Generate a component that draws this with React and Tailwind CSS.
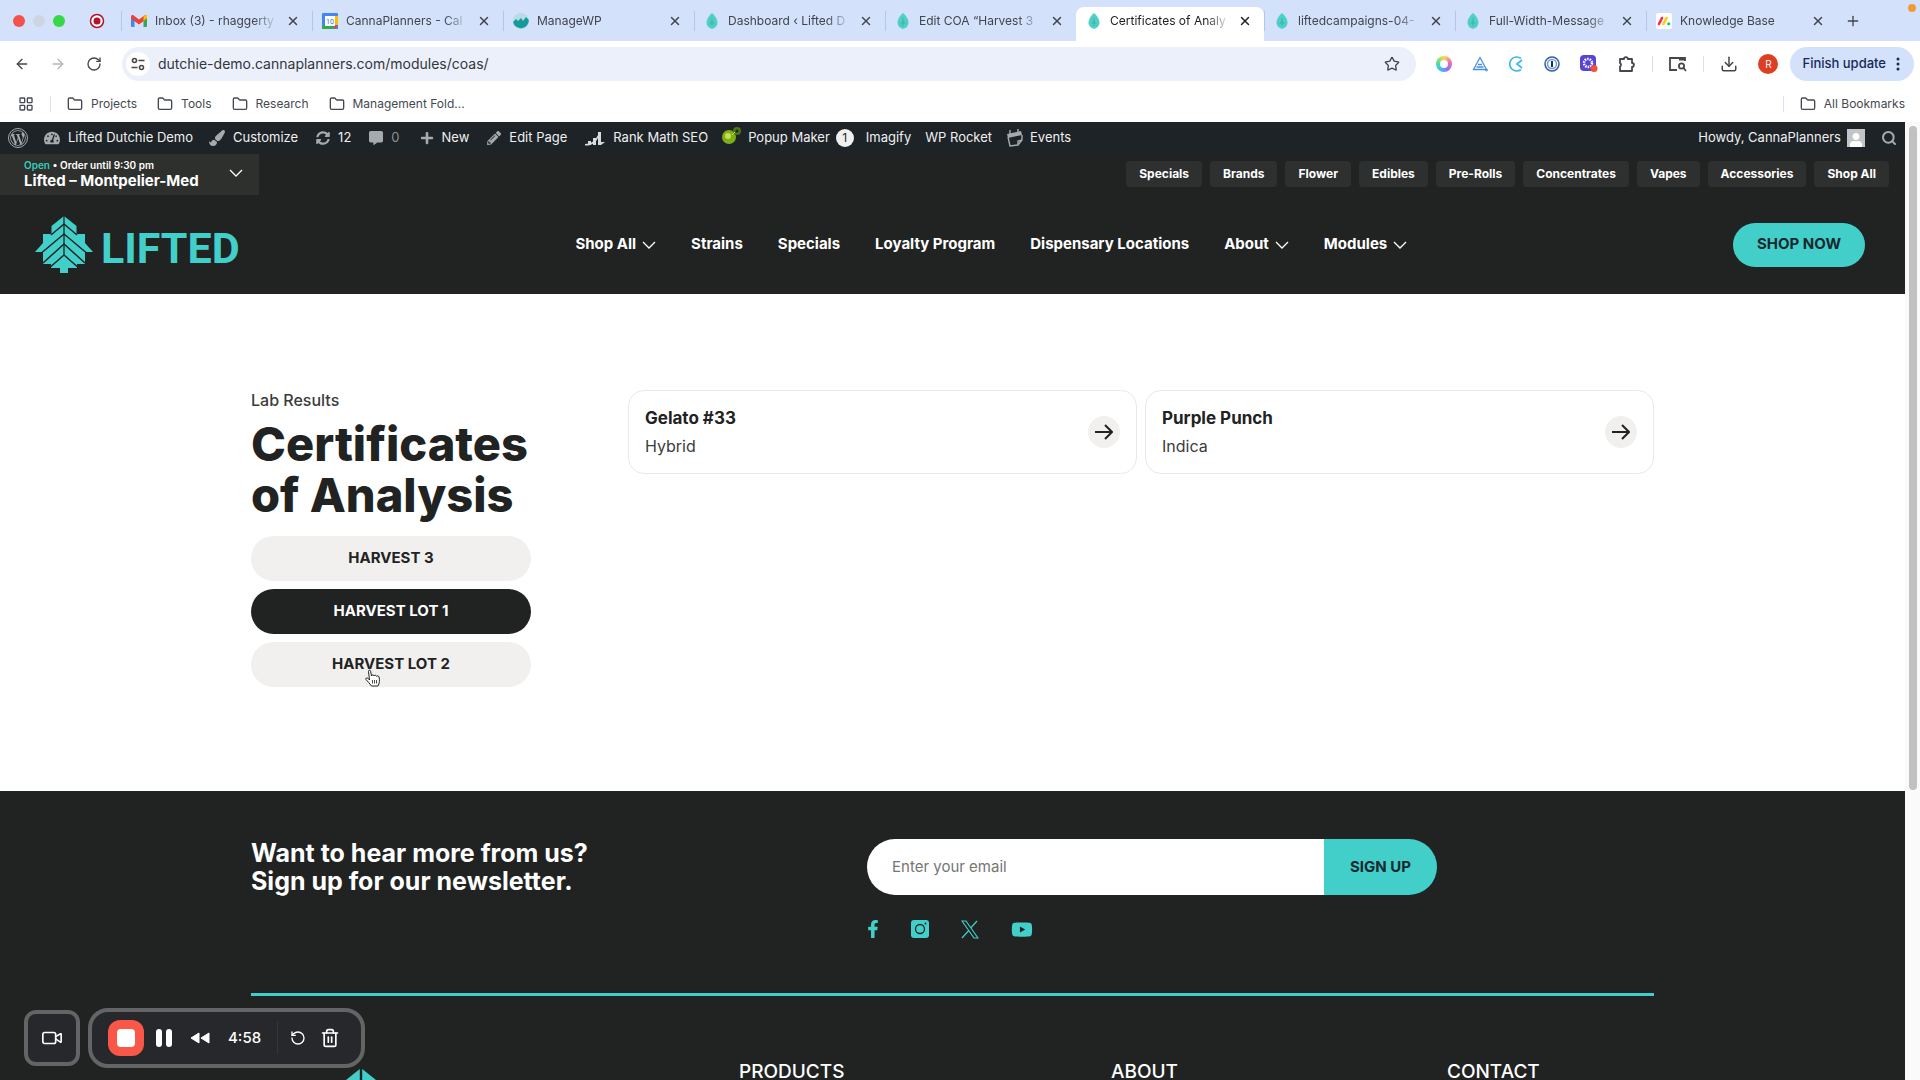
import {
  ArrowLeft,
  ArrowRight,
  Download,
  Folder,
  LayoutGrid,
  Plus,
  RotateCcw,
  RotateCw,
  Search,
  Star,
  Trash2,
  X,
  Video,
} from 'lucide-react';
import {
  FaCommentAlt,
  FaFacebookF,
  FaPaintBrush,
  FaPencilAlt,
  FaPlus,
  FaSyncAlt,
  FaTachometerAlt,
  FaUser,
  FaWordpressSimple,
  FaYoutube,
} from 'react-icons/fa';

const tabs = [
  { title: 'Inbox (3) - rhaggerty', icon: 'gmail' },
  { title: 'CannaPlanners - Cal', icon: 'calendar' },
  { title: 'ManageWP', icon: 'managewp' },
  { title: 'Dashboard ‹ Lifted D', icon: 'drop' },
  { title: 'Edit COA “Harvest 3', icon: 'drop' },
  { title: 'Certificates of Analy', icon: 'drop', active: true },
  { title: 'liftedcampaigns-04-', icon: 'drop' },
  { title: 'Full-Width-Message', icon: 'drop' },
  { title: 'Knowledge Base', icon: 'monday' },
];

const bookmarks = ['Projects', 'Tools', 'Research', 'Management Fold...'];

const categories = [
  'Specials',
  'Brands',
  'Flower',
  'Edibles',
  'Pre-Rolls',
  'Concentrates',
  'Vapes',
  'Accessories',
  'Shop All',
];

const navItems = [
  { label: 'Shop All', menu: true },
  { label: 'Strains' },
  { label: 'Specials' },
  { label: 'Loyalty Program' },
  { label: 'Dispensary Locations' },
  { label: 'About', menu: true },
  { label: 'Modules', menu: true },
];

const lots = [
  { label: 'Harvest 3' },
  { label: 'Harvest Lot 1', active: true },
  { label: 'Harvest Lot 2' },
];

const results = [
  { name: 'Gelato #33', type: 'Hybrid' },
  { name: 'Purple Punch', type: 'Indica' },
];

function TabIcon({ name }) {
  switch (name) {
    case 'gmail':
      return (
        <svg viewBox="0 0 16 12" className="w-4 h-3 shrink-0">
          <path d="M0 1.500V11a1 1 0 0 0 1 1h2.500V5z" fill="#4285f4" />
          <path d="M16 1.500V11a1 1 0 0 1-1 1h-2.500V5z" fill="#34a853" />
          <path d="M0 1.700C0 .2 1.600-.4 2.700.5L8 4.600 13.300.5C14.400-.4 16 .2 16 1.700L15.500 4 8 9.500.5 4z" fill="#ea4335" />
          <path d="M12.500 1.100l.8-.6C14.400-.4 16 .2 16 1.700v1.500L12.500 6z" fill="#fbbc04" />
        </svg>
      );
    case 'calendar':
      return (
        <svg viewBox="0 0 16 16" className="w-4 h-4 shrink-0">
          <path d="M1 0h14a1 1 0 0 1 1 1v15H0V1a1 1 0 0 1 1-1z" fill="#4285f4" />
          <path d="M12 3h4v9h-4z" fill="#fbbc04" />
          <path d="M0 12h12v4H1a1 1 0 0 1-1-1z" fill="#34a853" />
          <path d="M12 12h4l-4 4z" fill="#ea4335" />
          <path d="M3 3h10v10H3z" fill="#fff" />
          <text x="8" y="10.500" textAnchor="middle" fontSize="7" fontFamily="Roboto, sans-serif" fill="#1a73e8">
            10
          </text>
        </svg>
      );
    case 'managewp':
      return (
        <svg viewBox="0 0 16 16" className="w-4 h-4 shrink-0">
          <circle cx="8" cy="8" r="8" fill="#b9dbe4" />
          <path d="M0 9l3-3 2 2 3-3 2 3 3-4 2.800 3A8 8 0 0 1 0 9z" fill="#159a9c" />
        </svg>
      );
    case 'monday':
      return (
        <svg viewBox="0 0 16 16" className="w-4 h-4 shrink-0">
          <rect width="16" height="16" rx="2" fill="#fff" />
          <path d="M3 11l3-6" stroke="#f62b54" strokeWidth="2.600" strokeLinecap="round" />
          <path d="M7.500 11l3-6" stroke="#fc0" strokeWidth="2.600" strokeLinecap="round" />
          <circle cx="12.700" cy="10.800" r="1.500" fill="#00ca72" />
        </svg>
      );
    default:
      return (
        <svg viewBox="0 0 16 16" className="w-4 h-4 shrink-0">
          <path d="M8 0c3 2.500 5.500 6 5.500 9.500S11 15 8 16c-3-1-5.500-3-5.500-6.500S5 2.500 8 0z" fill="#4fd0c7" />
          <path d="M8 5v8M8 9l2.500 1.800M8 9l-2.500 1.800" stroke="#35a9a2" strokeWidth=".8" fill="none" />
        </svg>
      );
  }
}

function Chevron() {
  return (
    <svg viewBox="0 0 14 8" className="w-3.5 h-2" fill="none" stroke="currentColor" strokeWidth="1.300">
      <path d="M1 1l6 6 6-6" />
    </svg>
  );
}

function BrowserTabs() {
  return (
    <div className="flex shrink-0 h-[41px] bg-[#d3e1fb] text-[#41454d] text-xs">
      <div className="flex items-center w-[121px] shrink-0 pl-[13px] gap-2">
        <span className="w-3 h-3 rounded-full bg-[#f4514e]" />
        <span className="w-3 h-3 rounded-full bg-[#cdd5e3]" />
        <span className="w-3 h-3 rounded-full bg-[#36d843]" />
        <svg viewBox="0 0 16 16" className="w-4 h-4 ml-4">
          <circle cx="8" cy="8" r="6.500" fill="#fff" stroke="#b3122a" strokeWidth="1.500" />
          <circle cx="8" cy="8" r="3.500" fill="#b3122a" />
        </svg>
      </div>
      {tabs.map((tab) => (
        <div
          key={tab.title}
          className={`flex items-center min-w-0 pl-2.5 ${
            tab.active
              ? 'w-[188px] mt-[7px] pb-[7px] pr-3 bg-white rounded-t-lg text-[#222]'
              : 'relative w-[191px] pr-3'
          }`}
        >
          {!tab.active && <span className="absolute left-0 w-px h-5 bg-[#b4c6ee]" />}
          <TabIcon name={tab.icon} />
          <span className="flex-1 ml-2 mr-2 overflow-hidden whitespace-nowrap [mask-image:linear-gradient(to_right,black_80%,transparent)]">
            {tab.title}
          </span>
          <button aria-label={`Close ${tab.title}`}>
            <X className="w-3.5 h-3.5" strokeWidth={2.5} />
          </button>
        </div>
      ))}
      <div className="flex items-center flex-1 pl-2">
        <button aria-label="New tab">
          <Plus className="w-4 h-4" />
        </button>
      </div>
      <span className="w-2 h-2 mt-1 mr-1 rounded-full bg-[#f29b38]" />
    </div>
  );
}

function Extensions() {
  return (
    <div className="flex items-center gap-5 text-[#44474c]">
      <span className="w-4 h-4 rounded-full bg-[conic-gradient(#f9d94a,#f06fb0,#9a6cf5,#35c5f0,#63dd8a,#f9d94a)] p-1">
        <span className="block w-2 h-2 rounded-full bg-white" />
      </span>
      <svg viewBox="0 0 16 16" className="w-4 h-4" fill="none" stroke="#4a8fdc">
        <path d="M8 1.500L1.500 13.500h13z" strokeWidth="1.300" />
        <path d="M4.500 11h7M6 8.500h4" strokeWidth="1.500" />
        <circle cx="14.500" cy="14" r="1" />
      </svg>
      <svg viewBox="0 0 16 16" className="w-4 h-4" fill="none" stroke="#3cb7ea" strokeWidth="1.700">
        <path d="M13 2.500A7 7 0 1 0 13 13.500M14 4L9 8l5 4" />
      </svg>
      <svg viewBox="0 0 16 16" className="w-4 h-4" fill="none">
        <circle cx="8" cy="8" r="7" stroke="#2b5fa8" strokeWidth="1.500" />
        <circle cx="8" cy="8" r="4.500" stroke="#6f9ad2" strokeWidth="1.500" />
        <path d="M8 5v6" stroke="#1b2f52" strokeWidth="2" />
      </svg>
      <svg viewBox="0 0 18 18" className="w-[18px] h-[18px]">
        <rect width="16" height="16" rx="4" fill="#5746d3" />
        <circle cx="8" cy="8" r="4" fill="none" stroke="#fff" strokeWidth="2.500" strokeDasharray="1.500 1" />
        <circle cx="14" cy="13.500" r="3.500" fill="#f0503c" />
      </svg>
      <svg viewBox="0 0 18 18" className="w-[18px] h-[18px]" fill="none" stroke="currentColor" strokeWidth="1.800">
        <path d="M2 4h4a1.900 1.900 0 0 1 3.800 0H14v4a1.900 1.900 0 0 1 0 3.800V16H2v-4.500a2 2 0 0 0 0-3.500z" strokeLinejoin="round" />
      </svg>
      <span className="w-px h-4 -mx-1 bg-[#d5dff5]" />
      <svg viewBox="0 0 18 16" className="w-[18px] h-4" fill="none" stroke="currentColor" strokeWidth="1.800">
        <path d="M8 14H1V2h15v3" />
        <path d="M10 3h6" strokeWidth="3" />
        <circle cx="12.500" cy="10" r="2.600" />
        <path d="M14.500 12l2.500 3" />
      </svg>
      <span className="w-px h-4 -mx-1 bg-[#d5dff5]" />
      <Download className="w-[18px] h-[18px]" />
      <span className="flex items-center justify-center w-5 h-5 text-[10px] text-white rounded-full bg-[#dd3f24]">R</span>
    </div>
  );
}

function Toolbar() {
  return (
    <div className="flex items-center shrink-0 h-[46px] pl-[14px] pr-[6px] bg-white text-[#44474c]">
      <div className="flex items-center gap-5 w-[108px]">
        <button aria-label="Back">
          <ArrowLeft className="w-4 h-4" />
        </button>
        <button aria-label="Forward" className="text-[#b3b6bb]">
          <ArrowRight className="w-4 h-4" />
        </button>
        <button aria-label="Reload">
          <RotateCw className="w-4 h-4" />
        </button>
      </div>
      <div className="flex items-center flex-1 h-[34px] pl-1 pr-4 rounded-full bg-[#ecf0fa]">
        <span className="flex items-center justify-center w-6 h-6 bg-white rounded-full">
          <svg viewBox="0 0 14 14" className="w-3.5 h-3.5" fill="none" stroke="currentColor" strokeWidth="1.600">
            <circle cx="3.500" cy="3.500" r="2" />
            <path d="M7.500 3.500h6M.5 10.500h6" />
            <circle cx="10.500" cy="10.500" r="2" />
          </svg>
        </span>
        <input
          aria-label="Address"
          defaultValue="dutchie-demo.cannaplanners.com/modules/coas/"
          className="flex-1 ml-2 text-sm text-[#33363b] bg-transparent outline-none"
        />
        <Star className="w-4 h-4" />
      </div>
      <div className="ml-5">
        <Extensions />
      </div>
      <button className="flex items-center h-[34px] ml-3 pl-3 pr-3.5 rounded-full bg-[#d3e1fb] text-[#152a55] text-[13px] font-medium">
        Finish update
        <svg viewBox="0 0 4 16" className="w-1 h-4 ml-2.5" fill="currentColor">
          <circle cx="2" cy="3" r="1.500" />
          <circle cx="2" cy="8" r="1.500" />
          <circle cx="2" cy="13" r="1.500" />
        </svg>
      </button>
    </div>
  );
}

function BookmarksBar() {
  return (
    <div className="flex items-center shrink-0 h-[35px] pb-0.5 pl-[18px] pr-[15px] bg-white text-xs text-[#45494f]">
      <LayoutGrid className="w-4 h-4" />
      <span className="w-px h-4 mx-4 bg-[#d5dff5]" />
      <div className="flex items-center gap-5">
        {bookmarks.map((name) => (
          <a key={name} href="#" className="flex items-center gap-2">
            <Folder className="w-4 h-4" />
            {name}
          </a>
        ))}
      </div>
      <span className="w-px h-4 ml-auto mr-4 bg-[#d5dff5]" />
      <a href="#" className="flex items-center gap-2">
        <Folder className="w-4 h-4" />
        All Bookmarks
      </a>
    </div>
  );
}

function AdminBar() {
  return (
    <div className="flex items-center shrink-0 h-8 pl-2 pr-2 bg-[#1d2327] text-[#f0f0f1] text-[13px] whitespace-nowrap">
      <span className="flex items-center justify-center w-5 h-5 rounded-full border border-[#a7aaad] text-[#a7aaad]">
        <FaWordpressSimple className="w-4 h-4" />
      </span>
      <a href="#" className="flex items-center gap-2 ml-4">
        <FaTachometerAlt className="w-4 h-4 text-[#a7aaad]" />
        Lifted Dutchie Demo
      </a>
      <a href="#" className="flex items-center gap-2 ml-4">
        <FaPaintBrush className="w-4 h-4 text-[#a7aaad]" />
        Customize
      </a>
      <a href="#" className="flex items-center gap-2 ml-[18px]">
        <FaSyncAlt className="w-3.5 h-3.5 text-[#a7aaad]" />
        12
      </a>
      <a href="#" className="flex items-center gap-2 ml-[18px] text-[#8c8f94]">
        <FaCommentAlt className="w-3.5 h-3.5 text-[#a7aaad]" />
        0
      </a>
      <a href="#" className="flex items-center gap-2 ml-5">
        <FaPlus className="w-3.5 h-3.5 text-[#a7aaad]" />
        New
      </a>
      <a href="#" className="flex items-center gap-2 ml-[18px]">
        <FaPencilAlt className="w-3.5 h-3.5 text-[#a7aaad]" />
        Edit Page
      </a>
      <a href="#" className="flex items-center gap-2 ml-[18px]">
        <svg viewBox="0 0 20 16" className="w-5 h-4" fill="#d8dadc">
          <path d="M3 11h3v4H3zM8 8h3v7H8zM13 2h3v13h-3zM0 14c6 0 10-3 13-9l1 1C11 13 6 16 0 15.500zM16 12h4l-4 3z" />
        </svg>
        Rank Math SEO
      </a>
      <a href="#" className="flex items-center gap-1.5 ml-3.5">
        <svg viewBox="0 0 20 20" className="w-5 h-5 mb-1">
          <circle cx="7" cy="11" r="7" fill="#7fae1b" />
          <circle cx="15" cy="5" r="4" fill="#4d7512" />
          <circle cx="6" cy="10" r="3" fill="#c5e04c" />
          <circle cx="15" cy="5" r="1.500" fill="#1d2327" />
          <path d="M10 9l3-3" stroke="#c5e04c" />
        </svg>
        Popup Maker
        <span className="flex items-center justify-center w-[18px] h-[18px] rounded-full bg-[#f0f0f1] text-[#1d2327] text-xs">
          1
        </span>
      </a>
      <a href="#" className="ml-3">
        Imagify
      </a>
      <a href="#" className="ml-3.5">
        WP Rocket
      </a>
      <a href="#" className="flex items-center gap-1.5 ml-3.5">
        <svg viewBox="0 0 18 18" className="w-[18px] h-[18px]">
          <path d="M1 5l14-3 1 4L2 9z" fill="#a7aaad" />
          <path d="M2 8l2 9 8-1 4-5V6M4 1v4M12 0v3M12 16l0-4 4-1" fill="none" stroke="#a7aaad" strokeWidth="1.400" />
        </svg>
        Events
      </a>
      <a href="#" className="flex items-center gap-1.5 ml-auto">
        Howdy, CannaPlanners
        <span className="flex items-end justify-center w-[18px] h-[18px] bg-[#c3c4c7] text-white">
          <FaUser className="w-3.5 h-3.5" />
        </span>
      </a>
      <button aria-label="Search" className="ml-4">
        <Search className="w-4 h-4 text-[#a7aaad]" strokeWidth={3} />
      </button>
    </div>
  );
}

function TreeMark({ className }) {
  return (
    <svg viewBox="0 0 58 57" className={className}>
      <path
        d="M29 0L41.500 10V18H50V27L58 36H50V48L42 48V52H33V57H25V52H16V48H8V36H0L8 27V18H16.500V10z"
        fill="#42cfca"
      />
      <path d="M29 0V40" stroke="#212322" strokeWidth="1.300" />
      <path
        d="M29 8L16 19M29 8L42 19M29 18L4 39M29 18L54 39M29 28L8 47M29 28L50 47M29 39L13 53M29 39L45 53"
        fill="none"
        stroke="#212322"
        strokeWidth="1.500"
      />
      <path d="M8 48.500L11 48.500L16 48.500L14 53H8zM50 48.500H42L44 53H50z" fill="#212322" />
    </svg>
  );
}

function SiteHeader() {
  return (
    <header className="shrink-0 bg-[#212322] text-white">
      <div className="flex items-start justify-between">
        <button className="flex items-center justify-between w-[259px] h-[41px] pb-1 pl-6 pr-4 bg-[#2e302d] text-left">
          <span>
            <span className="block text-[10px] leading-4 font-semibold">
              <span className="text-[#35cdbd]">Open</span> • Order until 9:30 pm
            </span>
            <span className="block text-[15px] leading-4 font-bold">Lifted – Montpelier-Med</span>
          </span>
          <Chevron />
        </button>
        <div className="flex gap-2 pt-[7px] pr-4">
          {categories.map((name) => (
            <a key={name} href="#" className="px-[13px] text-xs leading-[26px] font-bold rounded-sm bg-[#2e302f]">
              {name}
            </a>
          ))}
        </div>
      </div>
      <div className="flex items-center justify-between h-[99px] pl-[35px] pr-10">
        <a href="#" className="flex items-center gap-2">
          <TreeMark className="w-[58px] h-[57px]" />
          <span className="pt-2 font-['Roboto',sans-serif] font-bold text-[43px] leading-[57px] text-[#42cfca]">LIFTED</span>
        </a>
        <nav className="flex items-center gap-[35px] pl-2.5 text-[15px] font-bold">
          {navItems.map((item) => (
            <a key={item.label} href="#" className="flex items-center gap-1.5">
              {item.label}
              {item.menu && <Chevron />}
            </a>
          ))}
        </nav>
        <button className="px-6 h-11 rounded-full bg-[#42cfca] text-[#17292e] text-[15px] font-bold">SHOP NOW</button>
      </div>
    </header>
  );
}

function HandCursor() {
  return (
    <svg viewBox="0 0 16 18" className="absolute left-[114px] top-[27px] w-4 h-[18px]">
      <path
        d="M4.500 11L3.500 2.500C3.300.8 5.300.6 5.600 2.200L6.500 7C6.700 5.600 8.600 5.500 9 7c.4-1.200 2.200-1 2.500.4.600-1 2.200-.6 2.500.6.800 3 .6 6-1 9H6.500C5 14.500 2.500 12.500 1 10.500.2 9.200 1.800 8.300 2.800 9.200z"
        fill="#fff"
        stroke="#222"
      />
      <path d="M7.500 11v3.500M9.500 11v3.500M11.500 11v3.500" stroke="#222" strokeWidth=".8" />
    </svg>
  );
}

function LabResults() {
  return (
    <main className="shrink-0 bg-white text-[#212322]">
      <div className="grid grid-cols-[280fr_1026fr] gap-x-[97px] w-[1403px] max-w-full mx-auto pt-24 pb-[104px]">
        <div className="min-w-0">
          <p className="text-base leading-5 font-medium text-[#3a3c3b]">Lab Results</p>
          <h1 className="mt-2 text-[47px] leading-[51px] font-extrabold whitespace-nowrap">
            Certificates
            <br />
            of Analysis
          </h1>
          <div className="flex flex-col gap-2 mt-4">
            {lots.map((lot) => (
              <div key={lot.label} className="relative">
                <button
                  className={`w-full h-[45px] rounded-full text-[15px] font-bold uppercase ${
                    lot.active ? 'bg-[#212322] text-white' : 'bg-[#f1f0ef]'
                  }`}
                >
                  {lot.label}
                </button>
                {lot.label === 'Harvest Lot 2' && <HandCursor />}
              </div>
            ))}
          </div>
        </div>
        <div className="grid items-start grid-cols-2 gap-2">
          {results.map((item) => (
            <a
              key={item.name}
              href="#"
              className="flex items-center justify-between h-[84px] px-4 border border-[#e9e9e9] rounded-2xl"
            >
              <span>
                <span className="block text-[17px] leading-7 font-bold">{item.name}</span>
                <span className="block text-base leading-7 text-[#3a3c3b]">{item.type}</span>
              </span>
              <span className="flex items-center justify-center w-8 h-8 rounded-full bg-[#f1f0ef]">
                <svg viewBox="0 0 18 16" className="w-[18px] h-4" fill="none" stroke="currentColor" strokeWidth="2">
                  <path d="M0 8h17M10 1l7 7-7 7" />
                </svg>
              </span>
            </a>
          ))}
        </div>
      </div>
    </main>
  );
}

function Footer() {
  return (
    <footer className="flex-1 bg-[#212322] text-white">
      <div className="w-[1403px] max-w-full mx-auto pt-12">
        <div className="grid grid-cols-[616fr_787fr] pb-[54px] border-b-3 border-[#42cfca]">
          <h2 className="text-[25px] leading-7 font-bold">
            Want to hear more from us?
            <br />
            Sign up for our newsletter.
          </h2>
          <div>
            <form className="flex w-[570px] h-14 overflow-hidden rounded-full">
              <input
                type="email"
                aria-label="Email"
                placeholder="Enter your email"
                className="flex-1 pl-[25px] pr-6 bg-white text-[15px] text-[#212322] placeholder:text-[#757575] outline-none"
              />
              <button type="button" className="w-[113px] bg-[#42cfca] text-[#17292e] text-[15px] font-bold">
                SIGN UP
              </button>
            </form>
            <div className="flex items-center h-5 mt-6 gap-8 text-[#42cfca]">
              <a href="#" aria-label="Facebook">
                <FaFacebookF className="w-3 h-[18px]" />
              </a>
              <a href="#" aria-label="Instagram">
                <svg viewBox="0 0 18 18" className="w-[18px] h-[18px]">
                  <rect width="18" height="18" rx="3" fill="currentColor" />
                  <circle cx="9" cy="9" r="4.500" fill="none" stroke="#212322" strokeWidth="1.300" />
                  <circle cx="14.500" cy="3.500" r="1" fill="#212322" />
                </svg>
              </a>
              <a href="#" aria-label="X">
                <svg viewBox="0 0 18 19" className="w-[18px] h-[19px]" fill="none" stroke="currentColor" strokeWidth="1.200">
                  <path d="M1 1h4l12 17h-4zM16 1L9.700 8M7.800 10.500L1 18" />
                </svg>
              </a>
              <a href="#" aria-label="YouTube">
                <FaYoutube className="w-[22px] h-[19px]" />
              </a>
            </div>
          </div>
        </div>
        <div className="grid grid-cols-[488fr_372fr_336fr_207fr] pt-[60px] text-[19px] leading-8 font-medium">
          <a href="#" aria-label="Lifted" className="flex justify-center w-[220px] pt-3">
            <TreeMark className="w-[110px] h-[108px]" />
          </a>
          <h3>PRODUCTS</h3>
          <h3>ABOUT</h3>
          <h3>CONTACT</h3>
        </div>
      </div>
    </footer>
  );
}

function RecorderWidget() {
  return (
    <div className="absolute left-6 bottom-3 flex items-center gap-2 text-white">
      <button
        aria-label="Camera"
        className="flex items-center justify-center w-14 h-14 rounded-xl border-4 border-[#626465] bg-[#27282b]"
      >
        <Video className="w-[22px] h-[22px]" strokeWidth={1.8} />
      </button>
      <div className="flex items-center h-[60px] w-[277px] pl-4 rounded-[20px] border-4 border-[#626465] bg-[#27282b]">
        <button aria-label="Stop" className="flex items-center justify-center w-9 h-9 rounded-xl bg-[#f95748]">
          <span className="w-[18px] h-[18px] rounded-sm bg-white" />
        </button>
        <button aria-label="Pause" className="flex gap-1 ml-3">
          <span className="w-1.5 h-[18px] rounded-sm bg-white" />
          <span className="w-1.5 h-[18px] rounded-sm bg-white" />
        </button>
        <button aria-label="Rewind" className="ml-[18px]">
          <svg viewBox="0 0 20 12" className="w-5 h-3" fill="#fff" stroke="#fff" strokeLinejoin="round">
            <path d="M1 6l8-5v10zM11 6l8-5v10z" />
          </svg>
        </button>
        <span className="ml-[18px] text-[15px] font-medium">4:58</span>
        <span className="w-px h-8 ml-4 bg-[#34363a]" />
        <button aria-label="Restart" className="ml-3">
          <RotateCcw className="w-4 h-4" />
        </button>
        <button aria-label="Delete" className="ml-3.5">
          <Trash2 className="w-5 h-5" />
        </button>
      </div>
    </div>
  );
}

export default function App() {
  return (
    <div className="relative flex flex-col h-screen overflow-hidden bg-white font-['Inter','Liberation_Sans',sans-serif]">
      <BrowserTabs />
      <Toolbar />
      <BookmarksBar />
      <div className="flex flex-1 min-h-0">
        <div className="flex flex-col flex-1 min-w-0 overflow-hidden">
          <AdminBar />
          <SiteHeader />
          <LabResults />
          <Footer />
        </div>
        <div className="w-[15px] pt-1 pl-1 bg-[#fafafa]">
          <div className="w-2 h-[664px] rounded-full bg-[#c1c1c1]" />
        </div>
      </div>
      <RecorderWidget />
    </div>
  );
}
